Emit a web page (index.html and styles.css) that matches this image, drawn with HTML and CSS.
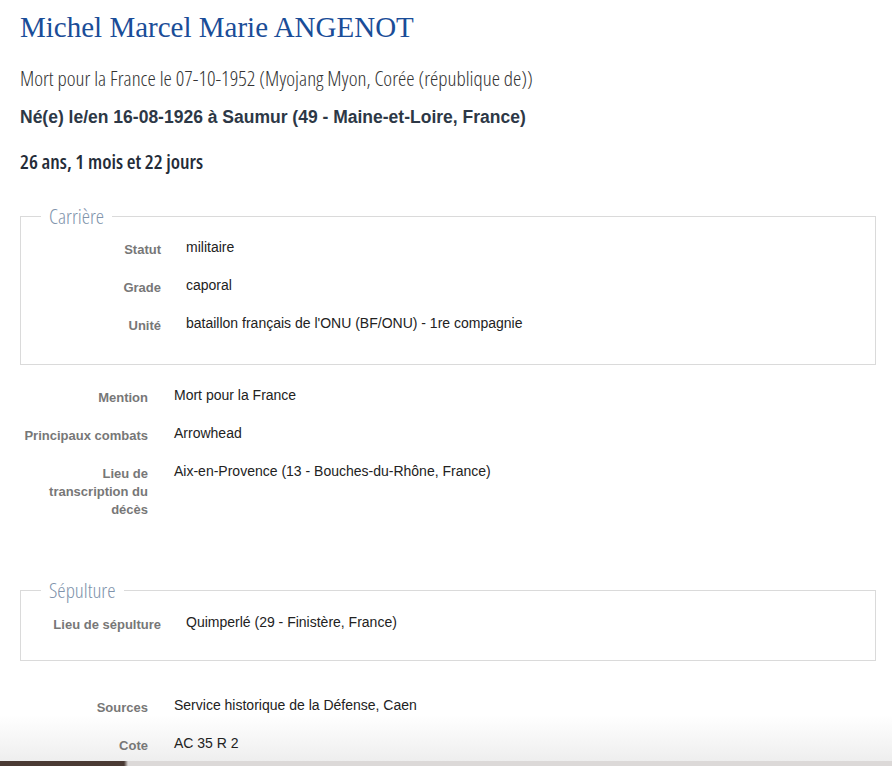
FILE: index.html
```html
<!DOCTYPE html>
<html lang="fr">
<head>
<meta charset="utf-8">
<title>Michel Marcel Marie ANGENOT</title>
<link rel="stylesheet" href="styles.css">
</head>
<body>
<main class="card">
  <h1 class="name">Michel Marcel Marie ANGENOT</h1>
  <p class="death">Mort pour la France le 07-10-1952 (Myojang Myon, Corée (république de))</p>
  <p class="birth">Né(e) le/en 16-08-1926 à Saumur (49 - Maine-et-Loire, France)</p>
  <p class="age">26 ans, 1 mois et 22 jours</p>

  <fieldset class="group group-career">
    <legend class="group-title">Carrière</legend>
    <div class="row"><span class="label">Statut</span><span class="value">militaire</span></div>
    <div class="row"><span class="label">Grade</span><span class="value">caporal</span></div>
    <div class="row"><span class="label">Unité</span><span class="value">bataillon français de l'ONU (BF/ONU) - 1re compagnie</span></div>
  </fieldset>

  <div class="plain plain-main">
    <div class="row"><span class="label">Mention</span><span class="value">Mort pour la France</span></div>
    <div class="row"><span class="label">Principaux combats</span><span class="value">Arrowhead</span></div>
    <div class="row"><span class="label">Lieu de transcription du décès</span><span class="value">Aix-en-Provence (13 - Bouches-du-Rhône, France)</span></div>
  </div>

  <fieldset class="group group-burial">
    <legend class="group-title">Sépulture</legend>
    <div class="row"><span class="label">Lieu de sépulture</span><span class="value">Quimperlé (29 - Finistère, France)</span></div>
  </fieldset>

  <div class="plain plain-sources">
    <div class="row"><span class="label">Sources</span><span class="value">Service historique de la Défense, Caen</span></div>
    <div class="row"><span class="label">Cote</span><span class="value">AC 35 R 2</span></div>
  </div>
</main>
<div class="backdrop"></div>
</body>
</html>
```

FILE: styles.css
```css
html, body {
  margin: 0;
  padding: 0;
}

body {
  width: 892px;
  height: 766px;
  overflow: hidden;
  background: #dcd9d8;
  font-family: "Liberation Sans", Arial, sans-serif;
  color: #222;
}

.card {
  box-sizing: border-box;
  height: 761px;
  padding: 10px 16px 0 20px;
  background: linear-gradient(to bottom, #ffffff 0, #ffffff 715px, #f6f6f6 740px, #eeeeee 761px);
  overflow: hidden;
}

.name {
  margin: 0;
  font-family: "Liberation Serif", "Times New Roman", serif;
  font-weight: normal;
  font-size: 29px;
  line-height: 34px;
  color: #1a4d98;
}

.death {
  margin: 21px 0 0;
  font-family: "Open Sans", sans-serif;
  font-stretch: 75%;
  font-weight: 350;
  font-size: 21px;
  line-height: 26px;
  color: #333333;
}

.birth {
  margin: 15px 0 0;
  font-size: 17.5px;
  font-weight: bold;
  line-height: 22px;
  color: #2d3846;
}

.age {
  margin: 20px 0 0;
  font-family: "Open Sans", sans-serif;
  font-stretch: 75%;
  font-size: 20px;
  font-weight: 600;
  line-height: 28px;
  color: #242c38;
}

.group {
  margin: 28px 0 0;
  padding: 10px 12px 12px;
  border: 1px solid #dadada;
}

.group-title {
  margin-left: 8px;
  padding: 0 8px;
  font-family: "Open Sans", sans-serif;
  font-stretch: 75%;
  font-weight: 350;
  font-size: 21px;
  line-height: 24px;
  color: #8093ab;
}

.row {
  display: grid;
  grid-template-columns: 128px 1fr;
  column-gap: 25px;
  margin-bottom: 17px;
  font-size: 14px;
  line-height: 18px;
}

.plain .row {
  column-gap: 26px;
}

.label {
  padding-top: 3px;
  text-align: right;
  font-size: 13px;
  font-weight: bold;
  color: #777777;
}

.value {
  color: #222222;
}

.plain-main {
  margin-top: 21px;
}

.group-burial {
  margin-top: 59px;
  padding-top: 11px;
  padding-bottom: 9px;
}

.plain-sources {
  margin-top: 35px;
}

.backdrop {
  height: 5px;
  background: linear-gradient(to right, #4a3a34 0, #4a3a34 124px, #dcd9d8 128px, #dcd9d8 100%);
}
```
